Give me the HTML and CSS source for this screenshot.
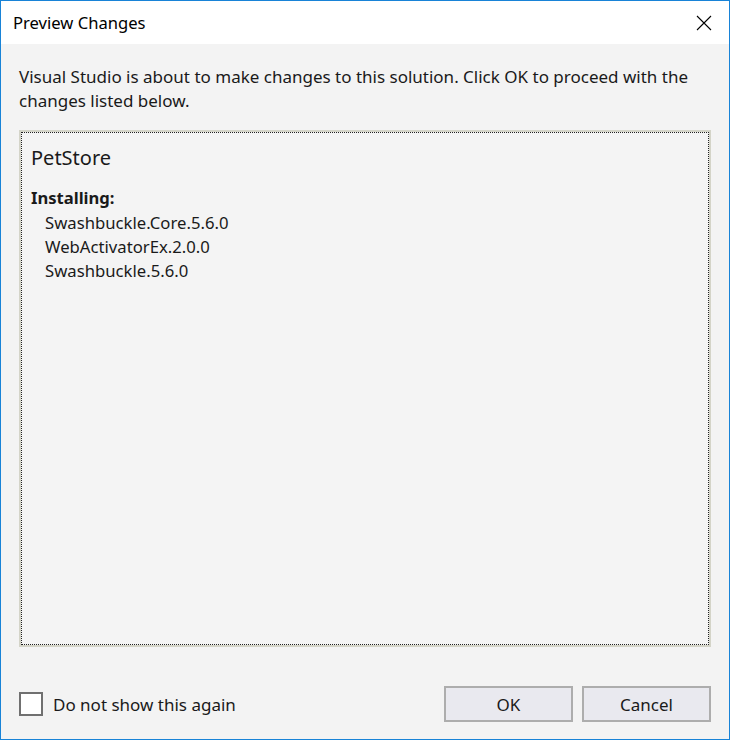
FILE: index.html
```html
<!DOCTYPE html>
<html>
<head>
<meta charset="utf-8">
<link rel="stylesheet" href="styles.css">
</head>
<body>
<div class="window">
  <div class="titlebar">
    <span class="title">Preview Changes</span>
    <span class="close">
      <svg width="16" height="16" viewBox="0 0 16 16"><path d="M1 1 L15 15 M15 1 L1 15" stroke="#000" stroke-width="1.1" fill="none"/></svg>
    </span>
  </div>
  <div class="content">
    <p class="intro">Visual Studio is about to make changes to this solution. Click OK to proceed with the changes listed below.</p>
    <div class="listbox">
      <div class="focus">
        <div class="project">PetStore</div>
        <div class="section">Installing:</div>
        <div class="items">
          <div class="item">Swashbuckle.Core.5.6.0</div>
          <div class="item">WebActivatorEx.2.0.0</div>
          <div class="item">Swashbuckle.5.6.0</div>
        </div>
      </div>
    </div>
    <div class="footer">
      <label class="check"><span class="box"></span><span>Do not show this again</span></label>
      <div class="buttons">
        <button class="btn">OK</button>
        <button class="btn">Cancel</button>
      </div>
    </div>
  </div>
</div>
</body>
</html>
```
FILE: styles.css
```css
html, body {
  margin: 0;
  padding: 0;
  background: #f3f3f3;
}
.window {
  width: 730px;
  height: 740px;
  box-sizing: border-box;
  border: 1px solid #1883d7;
  background: #f3f3f3;
  font-family: "Noto Sans", "Open Sans", sans-serif;
  color: #1a1a1a;
  display: flex;
  flex-direction: column;
}
.titlebar {
  height: 43px;
  background: #ffffff;
  display: flex;
  align-items: center;
  justify-content: space-between;
  padding: 0 17px 0 12px;
  flex: none;
}
.title {
  font-size: 16.6px;
  color: #000;
}
.close {
  display: flex;
  width: 16px;
  height: 16px;
}
.content {
  flex: 1;
  display: flex;
  flex-direction: column;
  padding: 21px 18px 17px 18px;
}
.intro {
  margin: 0;
  font-size: 17px;
  line-height: 24px;
}
.listbox {
  margin-top: 17px;
  height: 517px;
  box-sizing: border-box;
  border: 2px solid #d4d4c8;
  background: #f4f4f4;
  flex: none;
}
.focus {
  height: 100%;
  box-sizing: border-box;
  border: 1px dotted #222;
  padding: 10px 9px;
}
.project {
  font-size: 20px;
  line-height: 30px;
}
.section {
  font-weight: bold;
  font-size: 16.6px;
  line-height: 24px;
  margin-top: 13px;
}
.items {
  margin-top: 1px;
}
.item {
  font-size: 16.7px;
  line-height: 24px;
  padding-left: 14px;
}
.footer {
  margin-top: auto;
  display: flex;
  align-items: center;
  justify-content: space-between;
}
.check {
  display: flex;
  align-items: center;
  font-size: 17px;
}
.box {
  width: 20px;
  height: 20px;
  border: 2px solid #707070;
  background: #fff;
  margin-right: 10px;
}
.buttons {
  display: flex;
  gap: 9px;
}
.btn {
  width: 129px;
  height: 36px;
  box-sizing: border-box;
  border: 2px solid #adadad;
  background: #e9e9ef;
  font-family: "Noto Sans", "Open Sans", sans-serif;
  font-size: 17px;
  color: #1a1a1a;
  padding: 0;
}
```
